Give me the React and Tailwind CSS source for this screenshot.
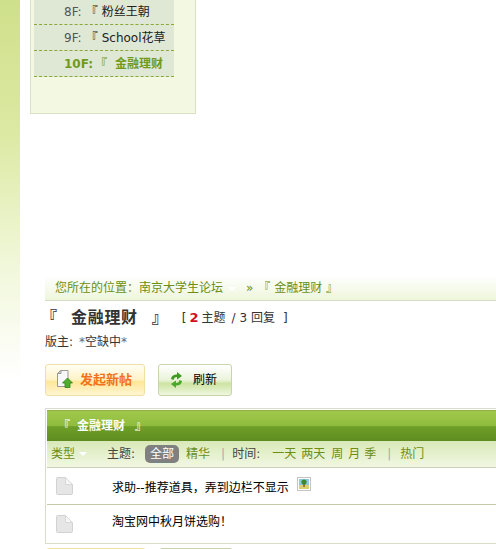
const cjk = 'font-["DejaVu_Sans","Noto_Sans_CJK_SC",sans-serif]';

function DocIcon({ className }) {
  return (
    <svg width="18" height="18" viewBox="0 0 18 18" className={className}>
      <path d="M1.5 1.5 Q1.5 .5 2.5 .5 H10.5 L17.5 7.5 V16.5 Q17.5 17.5 16.5 17.5 H2.5 Q1.5 17.5 1.5 16.5 Z" fill="#e6e6e6" stroke="#d2d2d2" />
      <path d="M10.5 .5 V7.5 H17.5 Z" fill="#f6f6f6" stroke="#d8d8d8" />
    </svg>
  );
}

function PostIcon() {
  return (
    <svg width="16" height="20" viewBox="0 0 16 20">
      <path d="M.5 3.5 L4 .5 H11 V16.5 H.5 Z" fill="#f7f7f7" stroke="#9a9a9a" />
      <path d="M.5 3.5 H4 V.5 Z" fill="#dcdcdc" stroke="#9a9a9a" />
      <path d="M10.5 8 L15.5 13 H13 V17.5 H8 V13 H5.5 Z" fill="#4fae2c" stroke="#2f7d1a" strokeWidth=".8" />
    </svg>
  );
}

function RefreshIcon() {
  return (
    <svg width="13" height="16" viewBox="0 0 13 16">
      <path d="M1 7 Q1.5 2.5 7 2.5 V0 L12 4 L7 7.5 V5 Q4 5 3.5 8 Z" fill="#3f9a23" />
      <path d="M12 9 Q11.5 13.5 6 13.5 V16 L1 12 L6 8.5 V11 Q9 11 9.5 8 Z" fill="#4aa92a" />
    </svg>
  );
}

function ImageIcon() {
  return (
    <svg width="14" height="14" viewBox="0 0 14 14" className="mb-[9px] ml-2">
      <rect x=".5" y=".5" width="13" height="13" fill="#fff" stroke="#c4c4c4" />
      <rect x="2" y="2" width="10" height="6" fill="#8cc9e6" />
      <rect x="2" y="8" width="10" height="4" fill="#d8d070" />
      <rect x="6.3" y="6" width="1.5" height="4" fill="#8a5a20" />
      <circle cx="7" cy="5" r="2.6" fill="#3d8a2a" />
    </svg>
  );
}

// the lower pair only shows its top edge in the window, so it goes without contents
function Buttons({ className, bare }) {
  return (
    <div className={`flex gap-[13px] ${className}`}>
      <div className="flex items-center w-[100px] h-[32px] rounded-[3px] border border-[#f2dfa4] bg-[linear-gradient(#fffef4,#fff2c6_50%,#ffe798_55%,#fff6d2)] pl-[11px]">
        {!bare && <PostIcon />}
        {!bare && <span className="ml-[7px] text-[13px] font-bold text-[#f2721a]">发起新帖</span>}
      </div>
      <div className="flex items-center w-[74px] h-[32px] rounded-[3px] border border-[#c9d3ac] bg-[linear-gradient(#ffffff,#eaf3da_50%,#cde4a2_62%,#eff7e0)] pl-[11px]">
        {!bare && <RefreshIcon />}
        {!bare && <span className="ml-[10px] text-[12px] text-black">刷新</span>}
      </div>
    </div>
  );
}

function Row({ children, border, textClass }) {
  return (
    <div className={`flex items-center h-[37px] pl-[8px] ${border ? 'border-b border-[#c3c9a9]' : ''}`}>
      <DocIcon />
      <span className={`ml-[39px] text-[12px] text-black ${textClass}`}>{children}</span>
    </div>
  );
}

export default function App() {
  return (
    <div className={`flex w-[496px] h-[549px] overflow-hidden bg-white text-[12px] ${cjk}`}>
      <div className="w-[20px] h-[380px] shrink-0 bg-[linear-gradient(#cfe08b,#dce9a3_35%,#f1f7da_70%,#ffffff)]" />
      <div className="flex-1 min-w-0">
        <div className="ml-[10px] w-[166px] h-[114px] border border-[#d8e2c2] border-t-0 bg-[#f3f8e2] pl-[3px]">
          <div className="w-[140px]">
            <div className="flex items-center h-[25px] pl-[30px] bg-[#dfe8d4] border-b border-dashed border-[#8aa83a] text-[#555]">
              8F:<span className="ml-[4px] text-[#222]">『</span><span className="ml-[4px] text-[#222]">粉丝王朝</span>
            </div>
            <div className="flex items-center h-[26px] pl-[30px] bg-[#dfe8d4] border-b border-dashed border-[#8aa83a] text-[#555]">
              9F:<span className="ml-[4px] text-[#222]">『</span><span className="ml-[4px] text-[#222]">School花草</span>
            </div>
            <div className="flex items-center h-[26px] pl-[30px] bg-[#dfe8d4] border-b border-dashed border-[#8aa83a] font-bold text-[#6f9a1c]">
              10F:<span className="ml-[2px]">『</span><span className="ml-[8px]">金融理财</span>
            </div>
          </div>
        </div>

        <div className="ml-[25px] w-[600px] mt-[161px]">
          <div className="flex items-center h-[26px] pl-[10px] border-b border-[#d5dcc6] bg-[linear-gradient(#ffffff,#eef6dc)] text-[#6b8e14]">
            <span>您所在的位置：南京大学生论坛</span>
            <span className="ml-[5px] mt-[2px] w-0 h-0 border-x-[4px] border-x-transparent border-t-[4px] border-t-white" />
            <span className="ml-[10px]">»</span>
            <span className="ml-[5px]">『 金融理财 』</span>
          </div>

          <div className="flex items-center h-[18px] mt-[8px] text-[#333]">
            <span className="-ml-[4px] text-[16px] font-bold">『</span>
            <span className="ml-[14px] text-[16px] font-bold tracking-[.7px]">金融理财</span>
            <span className="ml-[14px] text-[16px] font-bold">』</span>
            <span className="ml-[14px]">[</span>
            <span className="ml-[3px] text-[13px] font-bold text-[#d01020]">2</span>
            <span className="ml-[3px]">主题</span>
            <span className="ml-[6px]">/ 3 回复</span>
            <span className="ml-[8px]">]</span>
          </div>

          <div className="mt-[6px] h-[18px] flex items-center text-[#333]">
            版主: <span className="ml-[6px]"><span className="text-[#667]">*</span>空缺中<span className="text-[#667]">*</span></span>
          </div>

          <Buttons className="mt-[13px]" />

          <div className="mt-[12px] border border-[#d8dcc8] p-px">
            <div className="flex items-center h-[31px] pl-[11px] border-t border-[#8fb13f] bg-[linear-gradient(#a0c94c,#8fbc3e_50%,#6f9f28_52%,#5f8b20)] text-white font-bold">
              <span>『</span><span className="ml-[7px]">金融理财</span><span className="ml-[10px]">』</span>
            </div>
            <div className="flex items-center h-[27px] pl-[4px] border-b border-[#c9d0b4] bg-[linear-gradient(#d9e9b8,#f1f7e2)] text-[#6b8e14]">
              <span>类型</span>
              <span className="ml-[4px] w-0 h-0 border-x-[4px] border-x-transparent border-t-[4px] border-t-white" />
              <span className="ml-[20px] text-[#444]">主题:</span>
              <span className="ml-[10px] flex items-center justify-center w-[34px] h-[18px] rounded-[5px] bg-[#808080] text-white">全部</span>
              <span className="ml-[7px]">精华</span>
              <span className="ml-[11px] text-[#aaa]">|</span>
              <span className="ml-[7px] text-[#444]">时间:</span>
              <span className="ml-[12px]">一天</span>
              <span className="ml-[5px]">两天</span>
              <span className="ml-[6px]">周</span>
              <span className="ml-[5px]">月</span>
              <span className="ml-[4px]">季</span>
              <span className="ml-[11px] text-[#aaa]">|</span>
              <span className="ml-[9px]">热门</span>
            </div>
            <Row border textClass="mt-[4px]">
              <span className="flex items-center">求助--推荐道具，弄到边栏不显示<ImageIcon /></span>
            </Row>
            <Row textClass="mb-[4px]">淘宝网中秋月饼选购！</Row>
          </div>

          <Buttons bare className="mt-[4px] ml-px" />
        </div>
      </div>
    </div>
  );
}
